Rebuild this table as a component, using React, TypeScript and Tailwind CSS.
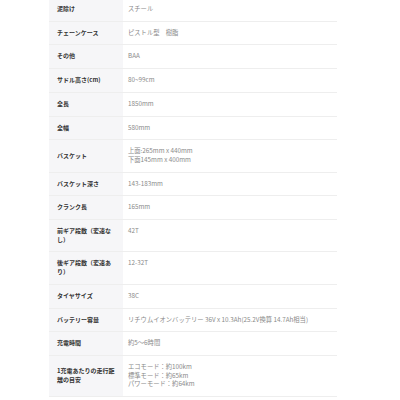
const specs: { label: string; value: string[] }[] = [
  { label: '泥除け', value: ['スチール'] },
  { label: 'チェーンケース', value: ['ピストル型　樹脂'] },
  { label: 'その他', value: ['BAA'] },
  { label: 'サドル高さ(cm)', value: ['80~99cm'] },
  { label: '全長', value: ['1850mm'] },
  { label: '全幅', value: ['580mm'] },
  { label: 'バスケット', value: ['上面:265mm x 440mm', '下面145mm x 400mm'] },
  { label: 'バスケット深さ', value: ['143-183mm'] },
  { label: 'クランク長', value: ['165mm'] },
  { label: '前ギア段数（変速なし）', value: ['42T'] },
  { label: '後ギア段数（変速あり）', value: ['12-32T'] },
  { label: 'タイヤサイズ', value: ['38C'] },
  { label: 'バッテリー容量', value: ['リチウムイオンバッテリー 36V x 10.3Ah(25.2V換算 14.7Ah相当)'] },
  { label: '充電時間', value: ['約5～6時間'] },
  { label: '1充電あたりの走行距離の目安', value: ['エコモード：約100km', '標準モード：約65km', 'パワーモード：約64km'] },
]

export default function App() {
  return (
    <div className="h-[400px] w-[400px] overflow-hidden bg-white font-['Noto_Sans_CJK_JP',sans-serif]">
      <div className="-mt-[2px] ml-[49px] w-[288px]">
        {specs.map((row) => (
          <div key={row.label} className="flex border-b border-[#eeeeee]">
            <div className="flex w-[74px] shrink-0 items-center bg-[#f6f6f8] py-[7px] pl-[8px] pr-[6px] text-[6px] leading-[8.7px] font-bold text-[#333333]">
              {row.label}
            </div>
            <div className="flex-1 py-[7px] pl-[5px] text-[6.3px] leading-[8.7px] text-[#8a8a8a]">
              {row.value.map((v) => (
                <div key={v}>{v}</div>
              ))}
            </div>
          </div>
        ))}
      </div>
    </div>
  )
}
